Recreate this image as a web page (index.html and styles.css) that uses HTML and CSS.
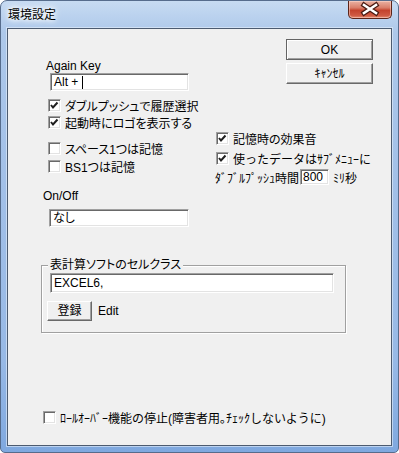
FILE: index.html
```html
<!DOCTYPE html>
<html lang="ja">
<head>
<meta charset="UTF-8">
<title>環境設定</title>
<link rel="stylesheet" href="styles.css">
</head>
<body>
<div class="window">
    <div class="titlebar">
        <span class="title">環境設定</span>
        <div class="close">
            <svg width="44" height="18" viewBox="0 0 44 18">
                <path d="M16 5 L28 13 M28 5 L16 13" stroke="#4a1a12" stroke-width="5" stroke-linecap="square"/>
                <path d="M16 5 L28 13 M28 5 L16 13" stroke="#ffffff" stroke-width="2.6" stroke-linecap="square"/>
            </svg>
        </div>
    </div>

    <div class="client">
        <div class="top">
            <!-- left column -->
            <div class="left">
                <div class="label l-again">Again Key</div>
                <div class="edit e-again">Alt +<span class="caret"></span></div>
                <div class="check c1"><span class="box on"></span>ダブルプッシュで履歴選択</div>
                <div class="check c2"><span class="box on"></span>起動時にロゴを表示する</div>
                <div class="check c3"><span class="box"></span>スペース1つは記憶</div>
                <div class="check c4"><span class="box"></span>BS1つは記憶</div>
                <div class="label l-onoff">On/Off</div>
                <div class="edit e-onoff">なし</div>
            </div>

            <!-- right column -->
            <div class="right">
                <button class="btn default">OK</button>
                <button class="btn cancel hw">ｷｬﾝｾﾙ</button>
                <div class="check r1"><span class="box on"></span>記憶時の効果音</div>
                <div class="check r2 hw"><span class="box on"></span>使ったデータはｻﾌﾞﾒﾆｭｰに</div>
                <div class="dpush hw">
                    <span class="dp-text">ﾀﾞﾌﾞﾙﾌﾟｯｼｭ時間</span>
                    <div class="edit e-ms">800</div>
                    <span class="dp-unit">ﾐﾘ秒</span>
                </div>
            </div>
        </div>

        <fieldset class="group">
            <legend>表計算ソフトのセルクラス</legend>
            <div class="edit e-class">EXCEL6,</div>
            <div class="g-row">
                <button class="btn reg">登録</button>
                <span class="g-edit">Edit</span>
            </div>
        </fieldset>

        <div class="check bottom hw"><span class="box"></span>ﾛｰﾙｵｰﾊﾞｰ機能の停止(障害者用｡ﾁｪｯｸしないように)</div>
    </div>
</div>
</body>
</html>
```

FILE: styles.css
```css
/* dialog window */

body {
    margin: 0;
    font-family: "Liberation Sans", "Noto Sans CJK JP", sans-serif;
    font-size: 12px;
    font-feature-settings: "palt";
    color: #000;
}

/* half-width kana keep their fixed width */
.hw {
    font-feature-settings: normal;
}

.window {
    width: 399px;
    height: 453px;
    box-sizing: border-box;
    border: 1px solid #566c8c;
    border-radius: 7px 7px 5px 5px;
    background: linear-gradient(180deg, #c7dbf2 0%, #adc8ea 7%, #a2c0e8 40%, #97b9e6 80%, #7fa8df 100%);
    display: flex;
    flex-direction: column;
    overflow: hidden;
}

.titlebar {
    height: 27px;
    display: flex;
    justify-content: space-between;
    align-items: flex-start;
}
.title {
    margin: 5px 0 0 7px;
    line-height: 16px;
    font-family: "Noto Sans CJK JP", sans-serif;
    text-shadow: 0 0 4px #fff, 0 0 6px #fff, 0 0 8px #fff;
}
.close {
    width: 44px;
    height: 18px;
    margin-right: 6px;
    box-sizing: border-box;
    border: 1px solid #5b2419;
    border-top: none;
    border-radius: 0 0 5px 5px;
    background: linear-gradient(180deg, #eab2a3 0%, #d97e6a 40%, #c4432c 55%, #cf5a42 85%, #e48b6f 100%);
    box-shadow: inset 0 0 0 1px rgba(255, 220, 210, 0.5);
}
.close svg {
    display: block;
    margin: -1px 0 0 -1px;
}

.client {
    margin-left: 6px;
    width: 385px;
    height: 418px;
    box-sizing: border-box;
    border: 1px solid #4c5b70;
    background: #f0f0f0;
    box-shadow: 0 0 0 1px rgba(230, 240, 252, 0.6);
}

.top {
    display: flex;
}
.left {
    width: 174px;
    margin-left: 33px;
    display: flex;
    flex-direction: column;
    align-items: flex-start;
}
.right {
    display: flex;
    flex-direction: column;
    align-items: flex-start;
}

.label {
    line-height: 14px;
    height: 14px;
}
.l-again { margin: 30px 0 0 5px; }
.l-onoff { margin: 15px 0 0 2px; }

/* sunken edit box */
.edit {
    box-sizing: border-box;
    background: #fff;
    border: 1px solid;
    border-color: #a0a0a0 #fff #fff #a0a0a0;
    box-shadow: inset 1px 1px #696969, inset -1px -1px #e3e3e3;
    padding-left: 3px;
    white-space: nowrap;
}
.e-again {
    margin-left: 9px;
    width: 139px;
    height: 18px;
    line-height: 16px;
}
.caret {
    display: inline-block;
    width: 1px;
    height: 13px;
    margin-left: 4px;
    background: #000;
    vertical-align: -3px;
}
.e-onoff {
    margin: 6px 0 0 8px;
    width: 140px;
    height: 18px;
    line-height: 16px;
}

/* check boxes */
.check {
    display: flex;
    align-items: center;
    gap: 4px;
    height: 16px;
    white-space: nowrap;
}
.box {
    width: 13px;
    height: 13px;
    box-sizing: border-box;
    flex: none;
    background: #fff;
    border: 1px solid;
    border-color: #a0a0a0 #fff #fff #a0a0a0;
    box-shadow: inset 1px 1px #696969, inset -1px -1px #e3e3e3;
}
.box.on {
    background: #fff url("data:image/svg+xml,%3Csvg xmlns='http://www.w3.org/2000/svg' width='11' height='11'%3E%3Cpath d='M2 5 L4 7.5 L8.5 2.5' fill='none' stroke='%23202020' stroke-width='2'/%3E%3C/svg%3E") no-repeat 0 0;
}
.c1 { margin: 6px 0 0 7px; }
.c2 { margin: 1px 0 0 7px; }
.c3 { margin: 10px 0 0 7px; }
.c4 { margin: 2px 0 0 7px; }
.r1 { margin: 46px 0 0 1px; }
.r2 { margin: 4px 0 0 1px; }
.bottom { margin: 76px 0 0 35px; }

/* push buttons */
.btn {
    font-family: inherit;
    font-size: 12px;
    color: #000;
    background: #f0f0f0;
    box-sizing: border-box;
    padding: 0;
    border: 1px solid;
    border-color: #fff #696969 #696969 #fff;
    box-shadow: inset -1px -1px #a0a0a0;
    line-height: 16px;
}
.btn.default {
    margin: 10px 0 0 71px;
    width: 87px;
    height: 21px;
    border-color: #646464;
    box-shadow: inset 1px 1px #fff, inset -1px -1px #a0a0a0;
}
.btn.cancel {
    margin: 3px 0 0 71px;
    width: 87px;
    height: 21px;
}

.dpush {
    margin-top: 3px;
    display: flex;
    align-items: center;
    height: 16px;
    white-space: nowrap;
}
.dp-text { width: 85px; }
.e-ms {
    width: 29px;
    height: 16px;
    line-height: 14px;
    padding-left: 2px;
}
.dp-unit { margin-left: 4px; }

/* group box */
.group {
    margin: 31px 0 0 33px;
    padding: 0 0 11px 0;
    width: 305px;
    box-sizing: border-box;
    border: 1px solid #a0a0a0;
    box-shadow: inset 1px 1px #fff, 1px 1px #fff;
}
.group legend {
    margin-left: 6px;
    padding: 0 2px;
    line-height: 14px;
    background: #f0f0f0;
}
.e-class {
    margin: 1px 0 0 8px;
    width: 284px;
    height: 20px;
    line-height: 18px;
}
.g-row {
    margin-top: 8px;
    display: flex;
    align-items: center;
}
.btn.reg {
    margin-left: 5px;
    width: 45px;
    height: 20px;
}
.g-edit { margin-left: 6px; }
```
